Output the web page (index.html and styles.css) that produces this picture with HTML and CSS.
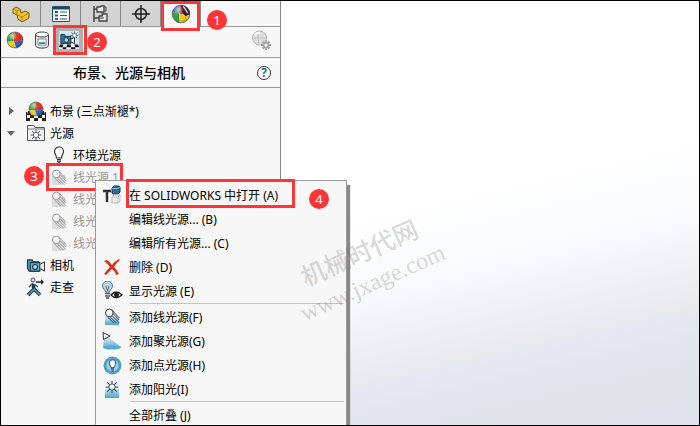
FILE: index.html
```html
<!DOCTYPE html>
<html lang="zh-CN">
<head>
  <meta charset="UTF-8">
  <meta name="viewport" content="width=device-width, initial-scale=1.0">
  <title>布景、光源与相机</title>
  <link rel="stylesheet" href="styles.css">
</head>
<body>
  <!-- 公用图标 -->
  <svg class="defs" width="0" height="0">
    <defs>
      <clipPath id="ball-clip"><circle cx="9" cy="9" r="8"/></clipPath>
      <radialGradient id="shine" cx="0.35" cy="0.25" r="0.8">
        <stop offset="0" stop-color="#fff" stop-opacity="0.7"/>
        <stop offset="0.35" stop-color="#fff" stop-opacity="0.05"/>
        <stop offset="0.75" stop-color="#000" stop-opacity="0"/>
        <stop offset="1" stop-color="#000" stop-opacity="0.3"/>
      </radialGradient>
      <linearGradient id="sky" x1="0" y1="0" x2="0" y2="1">
        <stop offset="0" stop-color="#e4f3fa"/>
        <stop offset="1" stop-color="#4ba3cc"/>
      </linearGradient>
    </defs>
    <symbol id="ball" viewBox="0 0 18 18">
      <g clip-path="url(#ball-clip)">
        <path d="M0 0H9Q7 5 8 10L0 11Z" fill="#2fa043"/>
        <path d="M9 0H18V9Q13 11 8 10Q7 5 9 0Z" fill="#e0301e"/>
        <path d="M0 11L8 10Q9 14 11 18H0Z" fill="#f4c820"/>
        <path d="M8 10Q13 11 18 9V18H11Q9 14 8 10Z" fill="#2b62d4"/>
      </g>
      <circle cx="9" cy="9" r="8" fill="url(#shine)" stroke="#555" stroke-width="0.6"/>
    </symbol>
    <symbol id="ray" viewBox="0 0 18 18">
      <g fill="none" stroke="currentColor" stroke-width="1.1">
        <path d="M9.500 3L17 11M10 6L17 13.500M9 8.500L17 16.500M7 10L14 17M4 10L11 17"/>
        <circle cx="6" cy="5.500" r="4.300" fill="#f4f4f4"/>
      </g>
    </symbol>
    <symbol id="sun" viewBox="0 0 18 18">
      <path d="M9 1V17M1 9H17M3 3L15 15M15 3L3 15" stroke="#263b48" stroke-width="1.3"/>
      <circle cx="9" cy="9" r="4" fill="#f3f6f8" stroke="#263b48"/>
    </symbol>
    <symbol id="camera" viewBox="0 0 20 18">
      <path d="M1 3H6L7 5H13V15H3L1 12Z" fill="#4da0c8" stroke="#17394d" stroke-width="1.2"/>
      <path d="M4 6H14V15H4Z" fill="#6fb8da" stroke="#17394d" stroke-width="1.2"/>
      <path d="M14 8L19 5V15L14 12Z" fill="#dfe8ec" stroke="#333"/>
      <circle cx="9" cy="10.500" r="2.600" fill="#b9def0" stroke="#17394d" stroke-width="1.200"/>
    </symbol>
    <symbol id="bulb" viewBox="0 0 18 18">
      <path d="M6.500 12C6.500 9 4.500 8 4.500 5.500A4.500 4.500 0 0 1 13.500 5.500C13.500 8 11.500 9 11.500 12Z" fill="#fafafa" stroke="#333" stroke-width="1.2"/>
      <path d="M7 13.500H11M7 15.200H11M8 16.800H10" stroke="#333" stroke-width="1.200"/>
    </symbol>
  </svg>

  <div class="window">
    <aside class="panel">
      <div class="tabs">
        <button class="tab" aria-label="特征">
          <svg width="18" height="18" viewBox="0 0 18 18">
            <path d="M1 4L4 2L8 4L9 8L13 6L17 8V13L10 17L6 14L5 10L1 8Z" fill="#f4c430" stroke="#7d5a0b"/>
            <path d="M1 4L5 6L8 4M5 6V10M6 10L10 12L17 8M10 12V17" fill="none" stroke="#a87b12" stroke-width="0.9"/>
          </svg>
        </button>
        <button class="tab" aria-label="属性">
          <svg width="18" height="18" viewBox="0 0 18 18">
            <path d="M0.500 1.500H17.500V16.500H0.500Z" fill="#fff" stroke="#25506b"/>
            <path d="M1 2H17V4.500H1Z" fill="#17496a"/>
            <path d="M3 7H6M3 10.500H6M3 14H6" stroke="#225f85" stroke-width="2"/>
            <path d="M8 7H15M8 10.500H15M8 14H15" stroke="#225f85"/>
          </svg>
        </button>
        <button class="tab" aria-label="配置">
          <svg width="18" height="18" viewBox="0 0 18 18" fill="none" stroke="#444">
            <path d="M2 1V17M2 4H7M2 13H7" stroke-width="1.500"/>
            <path d="M5 2H8L9 1H12V7H5ZM7 11H10L11 9H15V16H7Z" fill="#e6e6e6" stroke-width="1.300"/>
            <path d="M12 2H14V6H12M10 7V10M7 13H12" />
          </svg>
        </button>
        <button class="tab" aria-label="尺寸">
          <svg width="18" height="18" viewBox="0 0 18 18" fill="none" stroke="#222" stroke-width="1.500">
            <circle cx="9" cy="9" r="5.500"/>
            <path d="M9 0V18M0 9H18"/>
          </svg>
        </button>
        <button class="tab active" aria-label="外观">
          <svg width="20" height="20" viewBox="0 0 18 18">
            <g clip-path="url(#ball-clip)">
              <path d="M0 0H8L7 7L0 8Z" fill="#2b62c4"/>
              <path d="M8 0H18V10L8 9L7 7Z" fill="#d92c1c"/>
              <path d="M0 8L7 7L8 18H0Z" fill="#2fa043"/>
              <path d="M7 8Q12 11 18 10V18H9Z" fill="#f4c820"/>
              <path d="M9 1L18 2L17 9L13 11L9 6Z" fill="#292020"/>
              <path d="M11 2L15 8" stroke="#ddd" stroke-width="1.200"/>
            </g>
            <circle cx="9" cy="9" r="8" fill="url(#shine)" stroke="#555" stroke-width="0.6"/>
          </svg>
          <span class="mark mark-tab"></span>
          <span class="badge badge-1">1</span>
        </button>
      </div>

      <div class="tools">
        <button class="tool" aria-label="外观">
          <svg width="18" height="18"><use href="#ball"/></svg>
        </button>
        <button class="tool" aria-label="贴图">
          <svg width="16" height="18" viewBox="0 0 16 18">
            <path d="M1.500 3.500V14.500C1.500 18 14.500 18 14.500 14.500V3.500" fill="#e4e4e4" stroke="#444"/>
            <ellipse cx="8" cy="3.500" rx="6.500" ry="2.500" fill="#fff" stroke="#444"/>
            <path d="M4 8H12V14H4Z" fill="#fff" stroke="#888"/>
            <path d="M5 11H11V13H5Z" fill="#3d8fb8"/>
          </svg>
        </button>
        <button class="tool pressed" aria-label="布景、光源与相机">
          <svg width="20" height="20" viewBox="0 0 22 20">
            <path d="M0 0H22V20H0Z" fill="#cfe6f0"/>
            <path d="M0 15H22V20H0Z" fill="#fff"/>
            <path d="M1 15H5L4 18H0ZM9 15H13V18H8ZM17 15H21L22 18H18ZM4 18H8V20H4ZM13 18H18V20H13Z" fill="#111"/>
            <path d="M2 4H6L7 6H13V14H2Z" fill="#2f7599" stroke="#102d3e"/>
            <path d="M13 9L17 7V14L13 12Z" fill="#e5eef2" stroke="#222"/>
            <circle cx="8" cy="10" r="2.500" fill="#bde1f1" stroke="#102d3e"/>
            <svg x="12" y="0" width="10" height="10"><use href="#sun"/></svg>
          </svg>
          <span class="mark mark-tool"></span>
          <span class="badge badge-2">2</span>
        </button>
        <button class="tool edit" aria-label="编辑外观" disabled>
          <svg width="20" height="20" viewBox="0 0 20 20">
            <circle cx="8.500" cy="8" r="7" fill="#ddd" stroke="#b5b5b5"/>
            <path d="M8 1Q6 7 8 15M2 9Q8 6 15 8" fill="none" stroke="#c4c4c4"/>
            <path d="M4 5Q6 2 9 3" fill="none" stroke="#fff" stroke-width="2"/>
            <path d="M15 10V20M10 15H20M11.500 11.500L18.500 18.500M18.500 11.500L11.500 18.500" stroke="#a5a5a5" stroke-width="1.800"/>
            <circle cx="15" cy="15" r="2.500" fill="#f7f7f7" stroke="#a5a5a5" stroke-width="2"/>
          </svg>
        </button>
      </div>

      <div class="title-bar">
        <h1 class="title">布景、光源与相机</h1>
        <button class="help" aria-label="帮助">?</button>
      </div>

      <ul class="tree">
        <li class="row">
          <span class="arrow"><svg width="5" height="8"><path d="M0 0L5 4L0 8Z" fill="#666"/></svg></span>
          <svg class="icon" width="20" height="20" viewBox="0 0 20 20">
            <path d="M2 10H18L20 20H0Z" fill="#fff"/>
            <path d="M2 10H5V14H1ZM15 10H18L19 14H15ZM4 14H8V17H4ZM12 14H16V17H12ZM0 17H4V20H0ZM8 17H12V20H8ZM16 17H20V20H16Z" fill="#222"/>
            <path d="M0.500 19.500V11M19.500 19.500V11" stroke="#222"/>
            <svg x="2" y="0" width="16" height="16"><use href="#ball"/></svg>
          </svg>
          <span>布景 (三点渐褪*)</span>
        </li>
        <li class="row">
          <span class="arrow"><svg width="8" height="5"><path d="M0 0H8L4 5Z" fill="#666"/></svg></span>
          <svg class="icon" width="20" height="18" viewBox="0 0 20 18">
            <path d="M1.500 16.500V1.500H8L9 3.500H18.500V16.500Z" fill="#edf4f7" stroke="#555"/>
            <path d="M1.500 5H18" stroke="#777"/>
            <svg x="4" y="5" width="12" height="12"><use href="#sun"/></svg>
          </svg>
          <span>光源</span>
        </li>
        <li class="row child">
          <svg class="icon" width="18" height="18"><use href="#bulb"/></svg>
          <span>环境光源</span>
        </li>
        <li class="row child off">
          <svg class="icon" width="16" height="16" viewBox="0 0 16 16"><path d="M1 6H14V16H1Z" fill="#ddd"/><use href="#ray" width="16" height="16"/></svg>
          <span>线光源 1</span>
          <span class="mark mark-row"></span>
          <span class="badge badge-3">3</span>
        </li>
        <li class="row child off">
          <svg class="icon" width="16" height="16" viewBox="0 0 16 16"><path d="M1 6H14V16H1Z" fill="#ddd"/><use href="#ray" width="16" height="16"/></svg>
          <span>线光源 2</span>
        </li>
        <li class="row child off">
          <svg class="icon" width="16" height="16" viewBox="0 0 16 16"><path d="M1 6H14V16H1Z" fill="#ddd"/><use href="#ray" width="16" height="16"/></svg>
          <span>线光源 3</span>
        </li>
        <li class="row child off">
          <svg class="icon" width="16" height="16" viewBox="0 0 16 16"><path d="M1 6H14V16H1Z" fill="#ddd"/><use href="#ray" width="16" height="16"/></svg>
          <span>线光源 4</span>
        </li>
        <li class="row">
          <span class="arrow"></span>
          <svg class="icon" width="19" height="17"><use href="#camera"/></svg>
          <span>相机</span>
        </li>
        <li class="row">
          <span class="arrow"></span>
          <svg class="icon" width="20" height="20" viewBox="0 0 20 20" fill="none">
            <path d="M7 7L8 12L14 18M8 12L2 18" stroke="#173a4e" stroke-width="3.500"/>
            <path d="M8 12L14 18M8 12L2 18" stroke="#4f9fc4" stroke-width="1.500"/>
            <path d="M7 6L3 10M8 7L12 10" stroke="#555" stroke-width="1.500"/>
            <circle cx="7" cy="3" r="2" fill="#ddd" stroke="#555"/>
            <path d="M10 5H16" stroke="#222" stroke-width="1.500"/>
            <path d="M15 2L18 5L15 8Z" fill="#222"/>
          </svg>
          <span>走查</span>
        </li>
      </ul>
    </aside>

    <main class="canvas"></main>

    <!-- 右键菜单 -->
    <div class="menu" role="menu">
      <button class="item" role="menuitem">
        <span class="icon-box">
          <svg width="22" height="20" viewBox="0 0 22 20">
            <path d="M2 6H10M6 6V17" stroke="#333" stroke-width="2.500" />
            <path d="M11 3L13 1H18L19 2V7L17 9H12L11 8Z" fill="#2e6f94" stroke="#173c52"/>
            <path d="M11 3.500H17L19 2" fill="none" stroke="#7fb8d4"/>
            <path d="M11 12L13 10H19V16L17 18H11ZM11 12H17V18M17 12L19 10" fill="#f1f1f1" stroke="#bbb"/>
          </svg>
        </span>
        <span>在 SOLIDWORKS 中打开 (A)</span>
        <span class="mark mark-item"></span>
        <span class="badge badge-4">4</span>
      </button>
      <button class="item" role="menuitem"><span class="icon-box"></span>编辑线光源... (B)</button>
      <button class="item" role="menuitem"><span class="icon-box"></span>编辑所有光源... (C)</button>
      <button class="item" role="menuitem">
        <span class="icon-box">
          <svg width="18" height="18" viewBox="0 0 18 18">
            <path d="M1 3L4 2Q7 4 9 7Q12 3 16 1L17 2Q13 5 11 9Q14 12 16 16L13 17Q12 13 9 11Q6 14 3 17L1 16Q4 12 7 9Q5 6 1 3Z" fill="#dc3214"/>
          </svg>
        </span>
        删除 (D)
      </button>
      <button class="item" role="menuitem">
        <span class="icon-box">
          <svg width="22" height="20" viewBox="0 0 22 20">
            <path d="M4.500 11C4.500 9 1.500 8 1.500 5A5 5 0 0 1 11.500 5C11.500 8 8.500 9 8.500 11Z" fill="#b9d4e1" stroke="#5b7887"/>
            <path d="M5 5L6.500 10L8 5" fill="none" stroke="#5b7887"/>
            <path d="M4 12.500H9M4 15H9M5 17H8" stroke="#555" stroke-width="1.500"/>
            <path d="M10 14Q15 8 21 14Q15 19 10 14Z" fill="#fff" stroke="#222" stroke-width="1.300"/>
            <circle cx="15.500" cy="13.700" r="2.500" fill="#222"/>
          </svg>
        </span>
        显示光源 (E)
      </button>
      <hr class="line">
      <button class="item" role="menuitem">
        <span class="icon-box">
          <svg width="16" height="18" viewBox="0 0 16 18">
            <path d="M1 8H15V17H1Z" fill="url(#sky)"/>
            <use href="#ray" width="16" height="16" color="#333"/>
          </svg>
        </span>
        添加线光源(F)
      </button>
      <button class="item" role="menuitem">
        <span class="icon-box">
          <svg width="20" height="18" viewBox="0 0 20 18">
            <path d="M5 4L19 15Q10 19 1 15L2 7Z" fill="url(#sky)"/>
            <ellipse cx="10" cy="15.500" rx="9" ry="2" fill="#55a9d1"/>
            <path d="M1 0.500L8 4L1.500 7.500Z" fill="#fff" stroke="#333"/>
          </svg>
        </span>
        添加聚光源(G)
      </button>
      <button class="item" role="menuitem">
        <span class="icon-box">
          <svg width="19" height="19" viewBox="0 0 19 19">
            <circle cx="9.500" cy="9.500" r="9" fill="#4f9fc7"/>
            <circle cx="9.500" cy="9.500" r="6" fill="#9bd0e8"/>
            <svg x="3" y="3" width="13" height="13"><use href="#bulb"/></svg>
          </svg>
        </span>
        添加点光源(H)
      </button>
      <button class="item" role="menuitem">
        <span class="icon-box">
          <svg width="16" height="18" viewBox="0 0 16 18">
            <path d="M1 7H15V18H1Z" fill="url(#sky)"/>
            <svg x="1" y="0" width="14" height="14"><use href="#sun"/></svg>
          </svg>
        </span>
        添加阳光(I)
      </button>
      <hr class="line">
      <button class="item" role="menuitem"><span class="icon-box"></span>全部折叠 (J)</button>
    </div>

    <div class="watermark">
      <div>机械时代网</div>
      <div class="site">www.jxage.com</div>
    </div>
  </div>
</body>
</html>
```
FILE: styles.css
```css
* {
  box-sizing: border-box;
}

body {
  margin: 0;
  font-family: "Noto Sans", "Noto Sans CJK SC", sans-serif;
  font-size: 12px;
  color: #000;
}

button {
  border: none;
  padding: 0;
  background: none;
  font: inherit;
  color: inherit;
}

svg {
  display: block;
  flex: none;
}

.defs {
  position: absolute;
}

.window {
  position: relative;
  display: flex;
  height: 100vh;
  border: 1px solid #000;
  overflow: hidden;
}

.panel {
  flex: 0 0 280px;
  border-right: 1px solid #888;
  background-color: #f7f7f7;
}

.canvas {
  flex: 1;
  background: linear-gradient(167deg, #fff 45%, #f7f9fc 61%, #eeeff3 71%, #e8e9ec 77%, #e4e9f2 78%, #dfe3ea 91%, #dfe4ec 100%);
}

/* 顶部标签 */
.tabs {
  display: flex;
  height: 26px;
  border-bottom: 1px solid #999;
}

.tab {
  position: relative;
  display: flex;
  align-items: center;
  justify-content: center;
  width: 40px;
  height: 25px;
  border-right: 1px solid #888;
  background-color: #d3d3d3;
}

.tab.active {
  height: 26px;
  background-color: #f7f7f7;
}

/* 工具栏 */
.tools {
  display: flex;
  align-items: center;
  height: 31px;
  padding: 0 6px 4px 0;
  border-bottom: 1px solid #999;
}

.tool {
  position: relative;
  display: flex;
  align-items: center;
  justify-content: center;
  width: 27px;
  height: 26px;
}

.tool.pressed {
  width: 28px;
  background-color: #b0b0b0;
}

.tool.edit {
  margin-left: auto;
}

.title-bar {
  display: flex;
  align-items: center;
  height: 30px;
  padding: 0 9px 0 0;
  border-bottom: 1px solid #999;
}

.title {
  flex: 1;
  margin: 0;
  padding-bottom: 2px;
  font-size: 14px;
  font-weight: 500;
  text-align: center;
}

.help {
  width: 14px;
  height: 14px;
  border: 1px solid #333;
  border-radius: 50%;
  background-color: #fff;
  color: #1c6a96;
  font-size: 12px;
  font-weight: bold;
  line-height: 12px;
}

/* 设计树 */
.tree {
  margin: 0;
  padding: 12px 0 0;
  list-style: none;
}

.row {
  position: relative;
  display: flex;
  align-items: center;
  height: 22px;
  white-space: nowrap;
}

.arrow {
  display: flex;
  justify-content: center;
  width: 20px;
  margin-right: 5px;
}

.row .icon {
  width: 20px;
  margin-right: 4px;
}

.row.child {
  padding-left: 48px;
}

.row.off {
  color: #999;
}

/* 菜单 */
.menu {
  position: absolute;
  left: 94px;
  top: 179px;
  width: 252px;
  padding: 2px;
  border: 1px solid #999;
  background-color: #f7f7f7;
  box-shadow: 3px 5px 1px #888;
}

.item {
  position: relative;
  display: flex;
  align-items: center;
  width: 100%;
  height: 24px;
  white-space: nowrap;
}

.icon-box {
  display: flex;
  justify-content: center;
  width: 28px;
  margin-right: 3px;
}

.line {
  height: 1px;
  margin: 0 0 1px 32px;
  border: none;
  background-color: #c3c3c3;
}

/* 红框和编号 */
.mark {
  position: absolute;
  border: 3px solid #fc3636;
}

.mark-tab {
  inset: 0 0 -4px 0;
}

.mark-tool {
  inset: -2px -4px -2px -2px;
}

.mark-row {
  left: 45px;
  top: -3px;
  width: 77px;
  height: 28px;
}

.mark-item {
  left: 28px;
  top: -4px;
  width: 169px;
  height: 29px;
}

.badge {
  position: absolute;
  width: 20px;
  height: 20px;
  border-radius: 50%;
  background-color: #fc3636;
  color: #fff;
  font-size: 13px;
  line-height: 20px;
  text-align: center;
}

.badge-1 {
  left: 46px;
  top: 9px;
}

.badge-2 {
  left: 32px;
  top: 5px;
}

.badge-3 {
  left: 23px;
  top: 0;
}

.badge-4 {
  left: 211px;
  top: 6px;
}

.watermark {
  position: absolute;
  left: 365px;
  top: 267px;
  color: rgba(110, 110, 110, .27);
  font-size: 25px;
  font-weight: 500;
  line-height: 33px;
  text-align: center;
  transform: translate(-50%, -50%) rotate(-24deg);
  pointer-events: none;
}

.site {
  font-family: "Liberation Serif", serif;
  font-size: 24px;
}
```
